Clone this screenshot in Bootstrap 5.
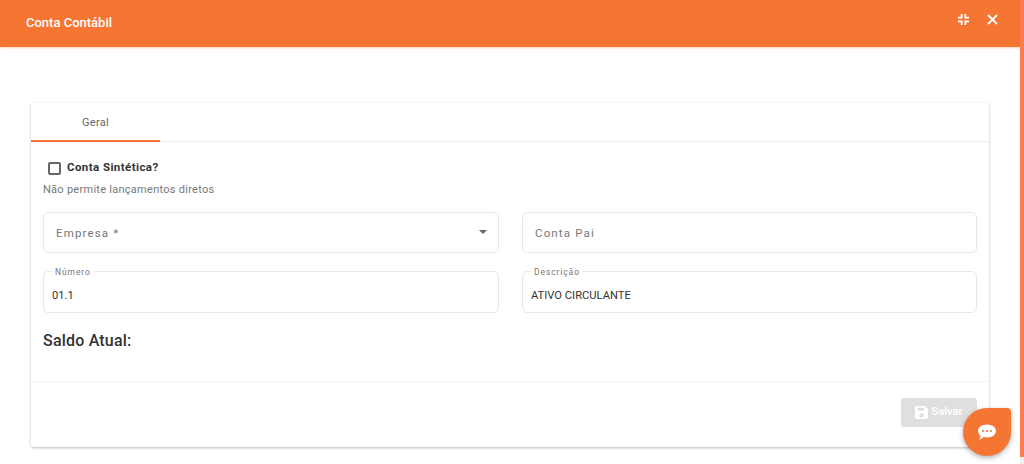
<!DOCTYPE html>
<html lang="pt">
<head>
<meta charset="utf-8">
<title>Conta Contábil</title>
<link href="https://cdn.jsdelivr.net/npm/bootstrap@5.3.0/dist/css/bootstrap.min.css" rel="stylesheet">
<style>
html,body{height:100%;overflow:hidden}
body{font-family:Roboto,"Liberation Sans",sans-serif;background:#fff;color:#333}
.shell{height:464px;width:1024px}
.pane{width:1020px;height:464px;position:relative}
.railbar{width:4px;height:464px;background:#efefef}
.railthumb{height:457px;background:#fc7b50}
.dlg-head{height:47px;background:#f57632;color:#fff;padding:0 22px 0 26px;box-shadow:0 1px 2px rgba(245,118,50,.35)}
.dlg-title{font-size:13px;font-weight:500;line-height:1;margin-top:-2px}
.dlg-icons{gap:18px;margin-top:-9px}
.sheet{margin:56px 31px 0 31px;width:958px;height:344px;border:0;border-radius:2px;box-shadow:0 1px 3px rgba(0,0,0,.27)}
.tabrow{height:39px;border-bottom:1px solid #eee}
.tabitem{width:129px;height:39px;font-size:11px;font-weight:400;color:#666;letter-spacing:.35px;border-bottom:2px solid #f57632;padding-top:3px}
.sheet-body{padding:0 12px;height:239px}
.chk-line{margin:18px 0 0 5px;height:16px;gap:6px}
.chk-box{width:13px;height:13px;border:2px solid #666;border-radius:2px}
.chk-text{font-size:11.5px;font-weight:700;color:#333;letter-spacing:.42px}
.hint{font-size:11px;color:#777;letter-spacing:.27px;margin-top:7px;line-height:14px}
.grid-a{display:grid;grid-template-columns:456px 455px;grid-template-rows:41px 42px;column-gap:23px;row-gap:18px;margin-top:15px}
.fieldbox{height:100%;border:1px solid #e8e8e8;border-radius:5px;position:relative;padding:0 12px;font-size:11.5px}
.ph{color:#777;letter-spacing:1.15px;font-size:11.5px;margin-top:3px}
.val{color:#333;margin-left:-4px;margin-top:9px;font-size:11.2px}
.flabel{position:absolute;left:8px;top:-5px;background:#fff;padding:0 3px;font-size:8.5px;line-height:10px;color:#777;letter-spacing:.9px}
.caret{width:0;height:0;border-left:4px solid transparent;border-right:4px solid transparent;border-top:4px solid #666;margin-left:auto;margin-right:-1px;margin-top:-1px}
.saldo{font-size:16px;font-weight:500;color:#333;margin-top:18px;line-height:20px;letter-spacing:.2px}
.foot{height:66px;border-top:1px solid #f3f3f3;padding:16px 12px 0 0}
.savebtn{width:76px;height:29px;background:#dfdfdf;border:0;border-radius:3px;color:#fff;font-size:11px;font-weight:500;gap:3px;padding:0;letter-spacing:.1px}
.chatfab{position:absolute;left:963px;top:408px;width:48px;height:48px;background:#f57632;border-radius:50% 4px 50% 50%;box-shadow:0 2px 5px rgba(0,0,0,.3)}
</style>
</head>
<body>
<div class="shell d-flex">
  <div class="pane">
    <header class="dlg-head d-flex align-items-center justify-content-between">
      <div class="dlg-title">Conta Contábil</div>
      <div class="dlg-icons d-flex align-items-center">
        <svg width="11" height="11" viewBox="0 0 11 11" fill="none" stroke="#fff" stroke-width="1.800"><path d="M3.700 0V3.700H0M7.300 0V3.700H11M3.700 11V7.300H0M7.300 11V7.300H11"/></svg>
        <svg width="11" height="11" viewBox="0 0 11 11" fill="none" stroke="#fff" stroke-width="1.800"><path d="M1 1L10 10M10 1L1 10"/></svg>
      </div>
    </header>
    <main class="card sheet">
      <div class="tabrow d-flex">
        <div class="tabitem d-flex align-items-center justify-content-center">Geral</div>
      </div>
      <div class="sheet-body">
        <div class="chk-line d-flex align-items-center"><span class="chk-box"></span><span class="chk-text">Conta Sintética?</span></div>
        <div class="hint">Não permite lançamentos diretos</div>
        <div class="grid-a">
          <div class="fieldbox d-flex align-items-center"><span class="ph">Empresa *</span><span class="caret"></span></div>
          <div class="fieldbox d-flex align-items-center"><span class="ph">Conta Pai</span></div>
          <div class="fieldbox d-flex align-items-center"><span class="flabel">Número</span><span class="val">01.1</span></div>
          <div class="fieldbox d-flex align-items-center"><span class="flabel">Descrição</span><span class="val">ATIVO CIRCULANTE</span></div>
        </div>
        <div class="saldo">Saldo Atual:</div>
      </div>
      <div class="foot d-flex justify-content-end align-items-start">
        <button class="btn savebtn d-flex align-items-center justify-content-center" type="button">
          <svg width="13" height="13" viewBox="0 0 13 13"><path fill="#fff" fill-rule="evenodd" d="M1.500 0H10L13 3V11.500C13 12.300 12.300 13 11.500 13H1.500C.7 13 0 12.300 0 11.500V1.500C0 .7 .7 0 1.500 0ZM2.500 1.800V4.800H9V1.800ZM6.500 7A2.200 2.200 0 1 0 6.500 11.400A2.200 2.200 0 1 0 6.500 7Z"/></svg>
          Salvar
        </button>
      </div>
    </main>
    <div class="chatfab d-flex align-items-center justify-content-center">
      <svg width="20" height="17" viewBox="0 0 20 17"><path fill="#fff" d="M10 .5C15 .5 19 3.300 19 7S15 13.500 10 13.500C8.800 13.500 7.700 13.300 6.700 13C5.500 14.300 3.500 15.500 1.800 15.500C3 14.300 3.600 13 3.500 11.700C2 10.500 1 8.900 1 7C1 3.300 5 .5 10 .5Z"/><circle cx="6" cy="7" r="1.100" fill="#f57632"/><circle cx="10" cy="7" r="1.100" fill="#f57632"/><circle cx="14" cy="7" r="1.100" fill="#f57632"/></svg>
    </div>
  </div>
  <div class="railbar"><div class="railthumb"></div></div>
</div>
<script src="https://cdn.jsdelivr.net/npm/bootstrap@5.3.0/dist/js/bootstrap.bundle.min.js"></script>
</body>
</html>
